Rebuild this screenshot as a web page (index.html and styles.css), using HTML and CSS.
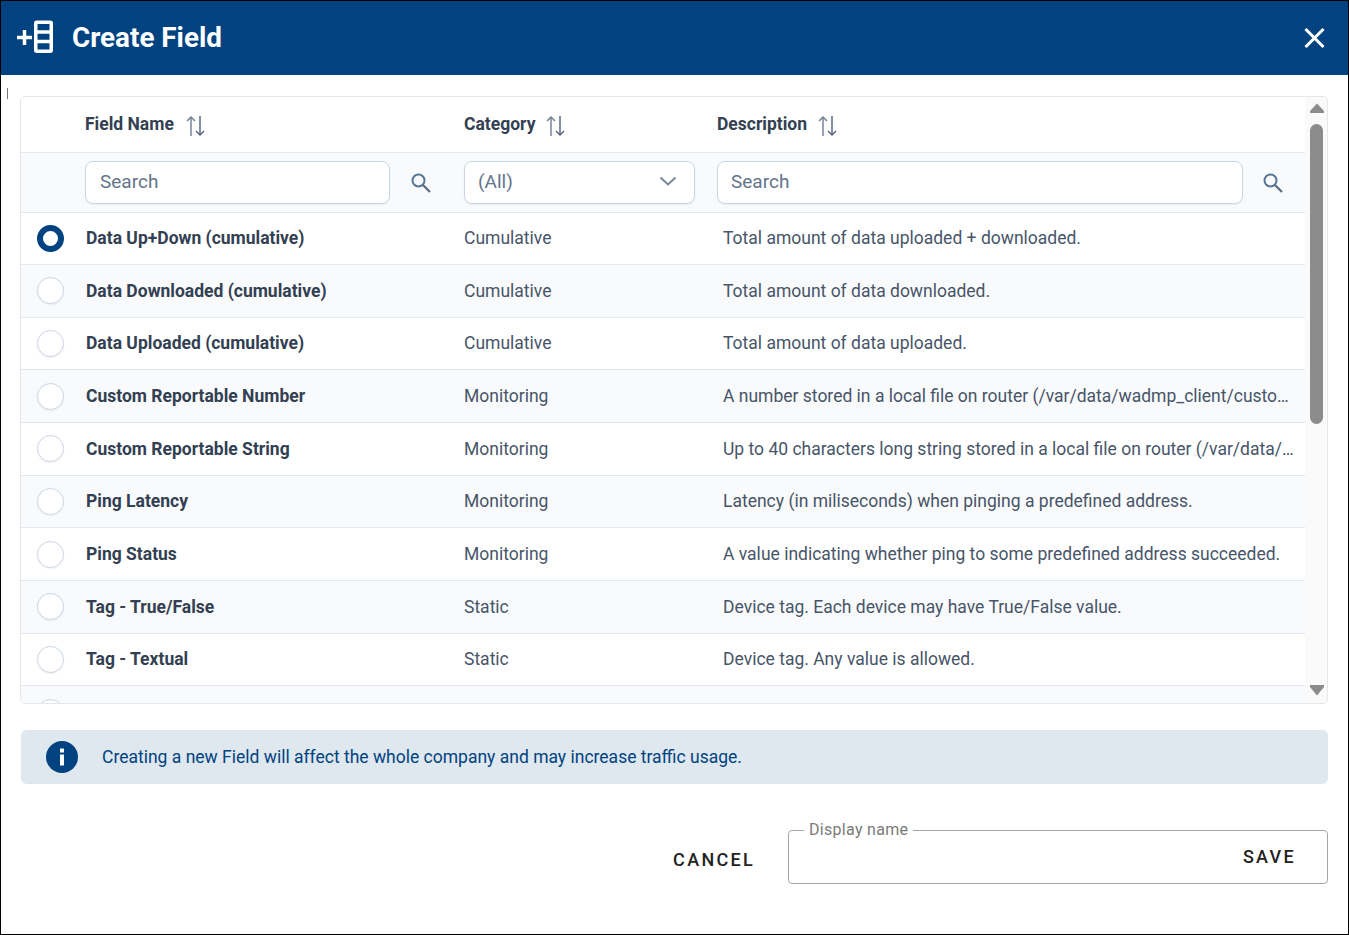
FILE: index.html
```html
<!DOCTYPE html>
<html lang="en">
<head>
    <meta charset="UTF-8">
    <title>Create Field</title>
    <link rel="stylesheet" href="styles.css">
</head>
<body>
<div class="dialog">
    <header class="title-bar">
        <svg class="title-icon" width="38" height="34" viewBox="0 0 38 34">
            <path d="M1 17.500h15M8.500 10v15" stroke="#fff" stroke-width="3.500" fill="none"/>
            <rect x="19.750" y="2.250" width="15.500" height="29" rx="1" stroke="#fff" stroke-width="3.500" fill="none"/>
            <path d="M19 12h17M19 21.500h17" stroke="#fff" stroke-width="3.500" fill="none"/>
        </svg>
        <h1>Create Field</h1>
        <svg class="close-icon" width="21" height="20" viewBox="0 0 21 20">
            <path d="M1.500 1l18 18M19.500 1l-18 18" stroke="#fff" stroke-width="3" fill="none"/>
        </svg>
    </header>
    <div class="caret"></div>
    <section class="grid-box">
        <div class="grid-main">
            <div class="row head-row">
                <div></div>
                <div class="head-cell first">Field Name
                    <svg class="sort" width="20" height="22" viewBox="0 0 20 22"><path d="M5 21V2M1 6l4-4 4 4" stroke="#74839a" stroke-width="1.500" fill="none"/><path d="M14 1v19M10 16l4 4 4-4" stroke="#5b6b82" stroke-width="1.500" fill="none"/></svg>
                </div>
                <div class="head-cell">Category
                    <svg class="sort" width="20" height="22" viewBox="0 0 20 22"><path d="M5 21V2M1 6l4-4 4 4" stroke="#74839a" stroke-width="1.500" fill="none"/><path d="M14 1v19M10 16l4 4 4-4" stroke="#5b6b82" stroke-width="1.500" fill="none"/></svg>
                </div>
                <div class="head-cell">Description
                    <svg class="sort" width="20" height="22" viewBox="0 0 20 22"><path d="M5 21V2M1 6l4-4 4 4" stroke="#74839a" stroke-width="1.500" fill="none"/><path d="M14 1v19M10 16l4 4 4-4" stroke="#5b6b82" stroke-width="1.500" fill="none"/></svg>
                </div>
            </div>
            <div class="row filter-row">
                <div></div>
                <div class="filter-cell name-filter">
                    <div class="field">Search</div>
                    <svg class="search" width="22" height="22" viewBox="0 0 22 22"><circle cx="8.500" cy="8.500" r="6" stroke="#557596" stroke-width="2" fill="none"/><path d="M13 13l7 7" stroke="#5a6b80" stroke-width="2.200" fill="none"/></svg>
                </div>
                <div class="filter-cell cat-filter">
                    <div class="field select">(All)
                        <svg width="18" height="10" viewBox="0 0 18 10"><path d="M1.500 1.500L9 8.500l7.500-7" stroke="#74839a" stroke-width="1.800" fill="none"/></svg>
                    </div>
                </div>
                <div class="filter-cell desc-filter">
                    <div class="field">Search</div>
                    <svg class="search" width="22" height="22" viewBox="0 0 22 22"><circle cx="8.500" cy="8.500" r="6" stroke="#557596" stroke-width="2" fill="none"/><path d="M13 13l7 7" stroke="#5a6b80" stroke-width="2.200" fill="none"/></svg>
                </div>
            </div>
            <div class="row data-row">
                <div class="radio-cell"><span class="radio checked"></span></div>
                <div class="name">Data Up+Down (cumulative)</div>
                <div class="cat">Cumulative</div>
                <div class="desc">Total amount of data uploaded + downloaded.</div>
            </div>
            <div class="row data-row">
                <div class="radio-cell"><span class="radio"></span></div>
                <div class="name">Data Downloaded (cumulative)</div>
                <div class="cat">Cumulative</div>
                <div class="desc">Total amount of data downloaded.</div>
            </div>
            <div class="row data-row">
                <div class="radio-cell"><span class="radio"></span></div>
                <div class="name">Data Uploaded (cumulative)</div>
                <div class="cat">Cumulative</div>
                <div class="desc">Total amount of data uploaded.</div>
            </div>
            <div class="row data-row">
                <div class="radio-cell"><span class="radio"></span></div>
                <div class="name">Custom Reportable Number</div>
                <div class="cat">Monitoring</div>
                <div class="desc">A number stored in a local file on router (/var/data/wadmp_client/custom_reportable_number)</div>
            </div>
            <div class="row data-row">
                <div class="radio-cell"><span class="radio"></span></div>
                <div class="name">Custom Reportable String</div>
                <div class="cat">Monitoring</div>
                <div class="desc">Up to 40 characters long string stored in a local file on router (/var/data/wadmp_client/custom)</div>
            </div>
            <div class="row data-row">
                <div class="radio-cell"><span class="radio"></span></div>
                <div class="name">Ping Latency</div>
                <div class="cat">Monitoring</div>
                <div class="desc">Latency (in miliseconds) when pinging a predefined address.</div>
            </div>
            <div class="row data-row">
                <div class="radio-cell"><span class="radio"></span></div>
                <div class="name">Ping Status</div>
                <div class="cat">Monitoring</div>
                <div class="desc">A value indicating whether ping to some predefined address succeeded.</div>
            </div>
            <div class="row data-row">
                <div class="radio-cell"><span class="radio"></span></div>
                <div class="name">Tag - True/False</div>
                <div class="cat">Static</div>
                <div class="desc">Device tag. Each device may have True/False value.</div>
            </div>
            <div class="row data-row">
                <div class="radio-cell"><span class="radio"></span></div>
                <div class="name">Tag - Textual</div>
                <div class="cat">Static</div>
                <div class="desc">Device tag. Any value is allowed.</div>
            </div>
            <div class="row data-row">
                <div class="radio-cell"><span class="radio"></span></div>
            </div>
        </div>
        <div class="scrollbar">
            <svg width="16" height="11" viewBox="0 0 16 11"><path d="M8 0.500L15 8v2H1V8z" fill="#8c8c8c"/></svg>
            <div class="thumb"></div>
            <svg class="arrow-down" width="16" height="11" viewBox="0 0 16 11"><path d="M1 0h14v2L8 10.500 1 2z" fill="#8c8c8c"/></svg>
        </div>
    </section>
    <div class="notice">
        <svg width="32" height="32" viewBox="0 0 32 32"><circle cx="16" cy="16" r="16" fill="#004380"/><rect x="14" y="13.500" width="4" height="11" fill="#fff"/><rect x="14" y="7.500" width="4" height="4" fill="#fff"/></svg>
        <span>Creating a new Field will affect the whole company and may increase traffic usage.</span>
    </div>
    <footer class="actions">
        <button class="btn cancel">CANCEL</button>
        <div class="display-name">
            <span class="legend">Display name</span>
            <button class="btn save">SAVE</button>
        </div>
    </footer>
</div>
</body>
</html>
```

FILE: styles.css
```css
* {
    box-sizing: border-box;
}
html, body {
    margin: 0;
    height: 100%;
}
body {
    font-family: Roboto, sans-serif;
    background-color: #fff;
}
.dialog {
    height: 935px;
    border: 1px solid #000;
    overflow: hidden;
}
.title-bar {
    height: 74px;
    background-color: #004380;
    color: #fff;
    display: flex;
    align-items: center;
    padding: 0 23px 0 15px;
}
.title-icon {
    margin: -3px 18px 0 0;
}
.title-bar h1 {
    margin: 0;
    padding-bottom: 2px;
    font-size: 27.800px;
    font-weight: 700;
    flex: 1;
}
.caret {
    width: 1px;
    height: 11px;
    background-color: #777;
    margin: 13px 0 0 6px;
}
.grid-box {
    margin: -3px 20px 0 19px;
    height: 608px;
    border: 1px solid #e4e7ec;
    border-radius: 5px;
    display: flex;
    overflow: hidden;
}
.grid-main {
    flex: 1;
    min-width: 0;
}
.row {
    display: grid;
    grid-template-columns: 64px 379px 253px 1fr;
    align-items: center;
    border-bottom: 1px solid #e2e8f0;
}
.head-row {
    height: 56px;
}
.head-cell {
    font-size: 17.500px;
    font-weight: 700;
    color: #333f52;
    display: flex;
    align-items: center;
    gap: 11px;
    padding-bottom: 1px;
}
.head-cell.first {
    gap: 12px;
}
.sort {
    margin-top: 3px;
}
.filter-row {
    height: 59.500px;
    background-color: #f9fafb;
}
.filter-cell {
    display: flex;
    align-items: center;
}
.field {
    height: 43px;
    background-color: #fff;
    border: 1px solid #cbd5e1;
    border-radius: 8px;
    box-shadow: 0 1px 2px rgba(0, 0, 0, 0.06);
    font-size: 19px;
    color: #64748b;
    display: flex;
    align-items: center;
    justify-content: space-between;
    padding: 0 17px 2px 14px;
}
.name-filter .field {
    width: 305px;
}
.name-filter .search {
    margin-left: 20px;
}
.cat-filter .field {
    width: 231px;
    padding-left: 13px;
}
.desc-filter .field {
    width: 526px;
    padding-left: 13px;
}
.desc-filter .search {
    margin-left: 19px;
}
.search {
    margin-top: 1px;
}
.data-row {
    height: 52.670px;
    font-size: 17.500px;
    color: #475569;
}
.data-row:nth-child(even) {
    background-color: #f9fafb;
}
.radio-cell {
    display: flex;
    padding-left: 16px;
}
.radio {
    width: 27px;
    height: 27px;
    border-radius: 50%;
    background-color: #fff;
    border: 1px solid #cbd5e1;
    box-shadow: 0 1px 2px rgba(0, 0, 0, 0.06);
}
.radio.checked {
    border: 6px solid #004380;
    box-shadow: none;
}
.name, .cat, .desc {
    padding-bottom: 0.600px;
}
.name {
    font-weight: 700;
    color: #333f52;
    padding-left: 1px;
}
.desc {
    padding-left: 6px;
    padding-right: 10px;
    white-space: nowrap;
    overflow: hidden;
    text-overflow: ellipsis;
}
.scrollbar {
    width: 22px;
    background-color: #fafafa;
    display: flex;
    flex-direction: column;
    align-items: center;
    padding: 6px 0 0 1px;
}
.thumb {
    width: 13px;
    height: 300px;
    margin-top: 10px;
    border-radius: 7px;
    background-color: #8c8c8c;
}
.arrow-down {
    margin-top: auto;
    margin-bottom: 7px;
}
.notice {
    margin: 26px 20px 0 20px;
    height: 54px;
    background-color: #dfe7ef;
    border-radius: 6px;
    display: flex;
    align-items: center;
    gap: 24px;
    padding-left: 25px;
    font-size: 17.500px;
    color: #004380;
}
.actions {
    display: flex;
    align-items: flex-start;
    justify-content: flex-end;
    margin: 46px 20px 0 0;
}
.btn {
    border: 0;
    background: none;
    font-family: Roboto, sans-serif;
    font-size: 18px;
    font-weight: 500;
    letter-spacing: 2.300px;
    color: #222;
    padding: 0;
}
.cancel {
    margin: 19px 33px 0 0;
}
.display-name {
    position: relative;
    width: 540px;
    height: 54px;
    border: 1px solid #a6a6a6;
    border-radius: 4px;
    display: flex;
    justify-content: flex-end;
    align-items: center;
    padding-right: 31px;
}
.legend {
    position: absolute;
    left: 15px;
    top: -11px;
    padding: 0 5px;
    background-color: #fff;
    font-size: 16px;
    letter-spacing: 0.300px;
    color: #7a7a7a;
}
.save {
    margin-top: -2px;
}
```
